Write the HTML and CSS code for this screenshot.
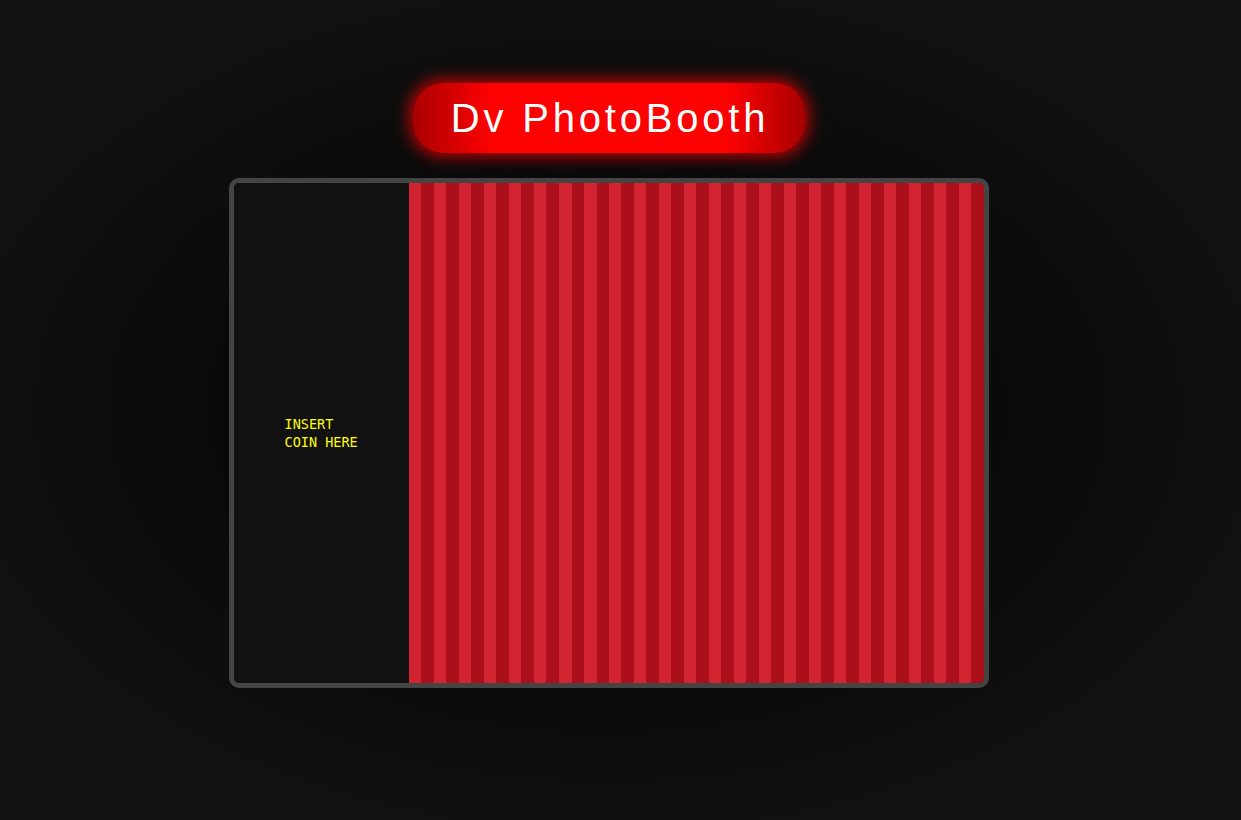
FILE: index.html
```html
<!DOCTYPE html>
<html>
<head>
<meta charset="utf-8">
<title>Dv PhotoBooth</title>
<link rel="stylesheet" href="styles.css">
</head>
<body>
  <main class="page">
    <h1 class="title">Dv PhotoBooth</h1>
    <section class="booth">
      <div class="side">
        <p class="coin">INSERT COIN HERE</p>
      </div>
      <div class="curtain"></div>
    </section>
  </main>
</body>
</html>
```

FILE: styles.css
```css
html, body {
  margin: 0;
  height: 100%;
}
body {
  background: radial-gradient(ellipse at 49% 50%, #050505 0%, #080808 35%, #111111 75%);
  background-color: #111;
  font-family: "Liberation Sans", Arial, sans-serif;
}
.page {
  min-height: 100vh;
  box-sizing: border-box;
  display: flex;
  flex-direction: column;
  align-items: center;
  padding-top: 83px;
  padding-right: 23px;
}
.title {
  margin: 0;
  height: 70px;
  box-sizing: border-box;
  padding: 0 36px 0 38px;
  display: flex;
  align-items: center;
  border-radius: 30px;
  background: linear-gradient(90deg, #a80000 0%, #ff0000 20%, #ff0000 80%, #a80000 100%);
  box-shadow: 0 0 15px 4px rgba(255, 0, 0, 0.7);
  color: #fff;
  font-size: 40px;
  font-weight: normal;
  letter-spacing: 3.8px;
  line-height: 1;
}
.booth {
  margin-top: 25px;
  display: flex;
  border: 5px solid #444;
  border-radius: 10px;
  overflow: hidden;
  height: 500px;
}
.side {
  width: 175px;
  background: #111;
  display: flex;
  align-items: center;
  justify-content: center;
}
.coin {
  margin: 0;
  width: 74px;
  color: #ffff00;
  font-family: "DejaVu Sans Mono", "Liberation Mono", monospace;
  font-size: 13.5px;
  line-height: 18px;
}
.curtain {
  width: 575px;
  background: repeating-linear-gradient(90deg, #d22330 0px, #d22330 12.5px, #ab0f1a 12.5px, #ab0f1a 25px);
}
```
